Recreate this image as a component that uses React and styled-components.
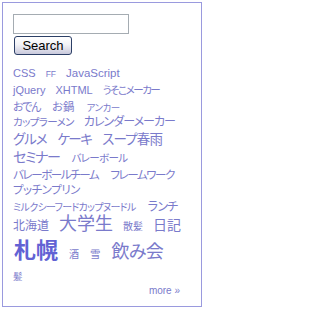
import React from 'react'
import styled, { createGlobalStyle } from 'styled-components'

const GlobalStyle = createGlobalStyle`
  body {
    margin: 0;
    background: #fff;
    font-family: "Liberation Sans", "Noto Sans CJK JP", sans-serif;
  }
`

const Box = styled.div`
  margin: 2px;
  width: 200px;
  height: 305px;
  box-sizing: border-box;
  border: 1px solid #9a9ade;
  padding: 11px 10px 0;
  display: flex;
  flex-direction: column;
`

const SearchInput = styled.input`
  width: 116px;
  height: 20px;
  box-sizing: border-box;
  border: 1px solid #a5acb2;
  margin: 0;
  padding: 0 3px;
  outline: none;
`

const SearchButton = styled.button`
  display: block;
  width: 58px;
  height: 19px;
  margin: 2px 0 0 1px;
  padding: 0;
  box-sizing: border-box;
  border: 1px solid #2c3f66;
  border-radius: 3px;
  background: linear-gradient(#ffffff 0%, #f2f2f6 45%, #c9c9dc 100%);
  font-family: "Liberation Sans", sans-serif;
  font-size: 13px;
  color: #000;
`

const Cloud = styled.div`
  display: flex;
  flex-direction: column;
`

// each line of the cloud; tags sit on a shared baseline at the bottom of the line
const Row = styled.div`
  display: flex;
  flex-wrap: wrap;
  align-content: flex-end;
  align-items: baseline;
  column-gap: ${p => p.$gap || 10}px;
  height: ${p => p.$h}px;
  padding-left: ${p => p.$indent || 0}px;
  white-space: nowrap;
`

const Tag = styled.a`
  font-size: ${p => p.$size}px;
  font-weight: ${p => (p.$bold ? 700 : 400)};
  letter-spacing: ${p => p.$ls || 0}em;
  color: ${p => (p.$bold ? '#6262d4' : '#7a7acb')};
  line-height: 1;
  text-decoration: none;
  font-feature-settings: "palt";
  cursor: pointer;
`

const More = styled.a`
  align-self: flex-end;
  margin: 5px 11px 0 0;
  font-size: 10px;
  line-height: 1;
  color: #7a7acb;
  text-decoration: none;
`

const rows = [
  { h: 24, tags: [['CSS', 11], ['FF', 8.5], ['JavaScript', 11.5]] },
  { h: 17, tags: [['jQuery', 11], ['XHTML', 11], ['うそこメーカー', 10.5, 0, -0.14]] },
  { h: 17, gap: 12, tags: [['おでん', 11, 0, -0.12], ['お鍋', 11.5], ['アンカー', 9.5, 0, -0.05]] },
  { h: 15, tags: [['カップラーメン', 10.5, 0, -0.06], ['カレンダーメーカー', 12, 0, -0.08]] },
  { h: 18, gap: 11, tags: [['グルメ', 13.5, 0, -0.08], ['ケーキ', 13.5, 0, -0.12], ['スープ春雨', 13.5, 0, -0.06]] },
  { h: 18, gap: 12, tags: [['セミナー', 14, 0, -0.1], ['バレーボール', 10.5, 0, -0.06]] },
  { h: 17, gap: 12, tags: [['バレーボールチーム', 11.5, 0, -0.12], ['フレームワーク', 11.5, 0, -0.12]] },
  { h: 15, tags: [['プッチンプリン', 11.5, 0, -0.04]] },
  { h: 17, gap: 12, tags: [['ミルクシーフードカップヌードル', 10, 0, -0.07], ['ランチ', 12, 0, -0.06]] },
  { h: 20, tags: [['北海道', 12], ['大学生', 18], ['散髪', 10], ['日記', 14]] },
  { h: 29, gap: 11, indent: 1, tags: [['札幌', 22, 1], ['酒', 10], ['雪', 10.5], ['飲み会', 18, 0, -0.04]] },
  { h: 19, tags: [['髪', 9.5]] },
]

const App = () => {
  return (
    <>
      <GlobalStyle />
      <Box>
        <SearchInput type="text" />
        <SearchButton>Search</SearchButton>
        <Cloud>
          {rows.map((row, i) => (
            <Row key={i} $h={row.h} $gap={row.gap} $indent={row.indent}>
              {row.tags.map(([text, size, bold, ls]) => (
                <Tag key={text} $size={size} $bold={bold} $ls={ls}>{text}</Tag>
              ))}
            </Row>
          ))}
        </Cloud>
        <More>more »</More>
      </Box>
    </>
  )
}

export default App
